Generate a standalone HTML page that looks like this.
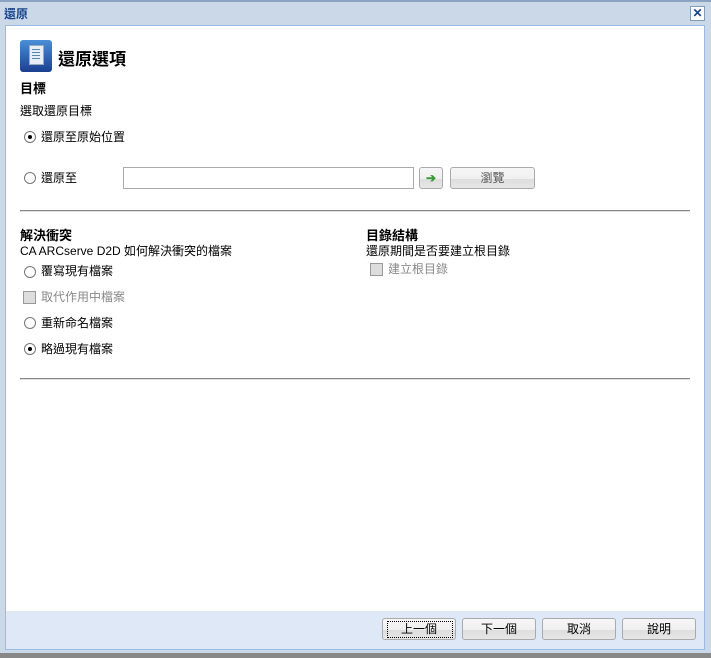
<!DOCTYPE html>
<html><head><meta charset="utf-8"><style>
body{margin:0;width:711px;height:658px;overflow:hidden;background:#cad8e8;font-family:"Liberation Sans","Noto Sans CJK TC",sans-serif;font-size:12px;color:#000;position:relative}
.a{position:absolute;white-space:nowrap}
.b{font-weight:bold;font-size:13px}
.radio{position:absolute;width:10px;height:10px;border:1px solid #777;border-radius:50%;background:#fff}
.radio.on::after{content:"";position:absolute;left:3px;top:3px;width:4px;height:4px;border-radius:50%;background:#000}
.chk{position:absolute;width:11px;height:11px;border:1px solid #999;background:#ddd}
.btn{position:absolute;height:20px;border:1px solid #aaa;border-radius:3px;background:linear-gradient(#f6f6f6 0,#f0f0f0 55%,#dedede 56%,#e6e6e6 100%);text-align:center;line-height:20px;font-size:12px}
.hr{position:absolute;left:20px;width:670px;height:1px;background:#888;border-bottom:1px solid #ddd}
</style></head><body>
<div class="a" style="left:0;top:0;width:711px;height:2px;background:#8aa3c2"></div>
<div class="a b" style="left:4px;top:5px;color:#15428b;font-size:12px">還原</div>
<div class="a" style="left:690px;top:6px;width:13px;height:13px;border:1px solid #7f9db9;background:#fff;color:#15428b;font-size:12px;line-height:12px;text-align:center;font-weight:bold">✕</div>
<div class="a" style="left:5px;top:25px;width:698px;height:623px;border:1px solid #99bbe8;background:#dfe8f6"></div>
<div class="a" style="left:6px;top:26px;width:698px;height:585px;background:#fff"></div>
<div class="a" style="left:0;top:653px;width:711px;height:5px;background:#888"></div>
<div class="a" style="left:20px;top:40px;width:32px;height:32px;border-radius:3px;background:linear-gradient(#4a8fd8,#1a3f90)"></div>
<div class="a" style="left:29px;top:45px;width:13px;height:18px;background:#e8eef8;border:1px solid #9ab"></div>
<div class="a" style="left:32px;top:49px;width:8px;height:1px;background:#58a;box-shadow:0 3px #58a,0 6px #58a,0 9px #58a"></div>
<div class="a b" style="left:58px;top:45px;font-size:17px">還原選項</div>
<div class="a b" style="left:20px;top:78px">目標</div>
<div class="a" style="left:20px;top:102px">選取還原目標</div>
<div class="radio on" style="left:24px;top:131px"></div>
<div class="a" style="left:41px;top:128px">還原至原始位置</div>
<div class="radio" style="left:24px;top:172px"></div>
<div class="a" style="left:41px;top:169px">還原至</div>
<div class="a" style="left:123px;top:167px;width:289px;height:20px;border:1px solid #aaa;background:#fff"></div>
<div class="btn" style="left:419px;top:167px;width:22px;color:#3a9a3a;font-weight:bold">➔</div>
<div class="btn" style="left:450px;top:167px;width:83px;color:#555">瀏覽</div>
<div class="hr" style="top:210px"></div>
<div class="a b" style="left:20px;top:225px">解決衝突</div>
<div class="a" style="left:20px;top:242px">CA ARCserve D2D 如何解決衝突的檔案</div>
<div class="radio" style="left:24px;top:266px"></div>
<div class="a" style="left:41px;top:262px">覆寫現有檔案</div>
<div class="chk" style="left:23px;top:291px"></div>
<div class="a" style="left:41px;top:288px;color:#888">取代作用中檔案</div>
<div class="radio" style="left:24px;top:317px"></div>
<div class="a" style="left:41px;top:314px">重新命名檔案</div>
<div class="radio on" style="left:24px;top:343px"></div>
<div class="a" style="left:41px;top:340px">略過現有檔案</div>
<div class="a b" style="left:366px;top:225px">目錄結構</div>
<div class="a" style="left:366px;top:242px">還原期間是否要建立根目錄</div>
<div class="chk" style="left:370px;top:263px"></div>
<div class="a" style="left:388px;top:260px;color:#888">建立根目錄</div>
<div class="hr" style="top:378px"></div>
<div class="btn" style="left:382px;top:618px;width:72px">上一個</div>
<div class="a" style="left:387px;top:621px;width:64px;height:15px;border:1px dotted #000"></div>
<div class="btn" style="left:462px;top:618px;width:72px">下一個</div>
<div class="btn" style="left:542px;top:618px;width:72px">取消</div>
<div class="btn" style="left:622px;top:618px;width:72px">說明</div>
</body></html>
